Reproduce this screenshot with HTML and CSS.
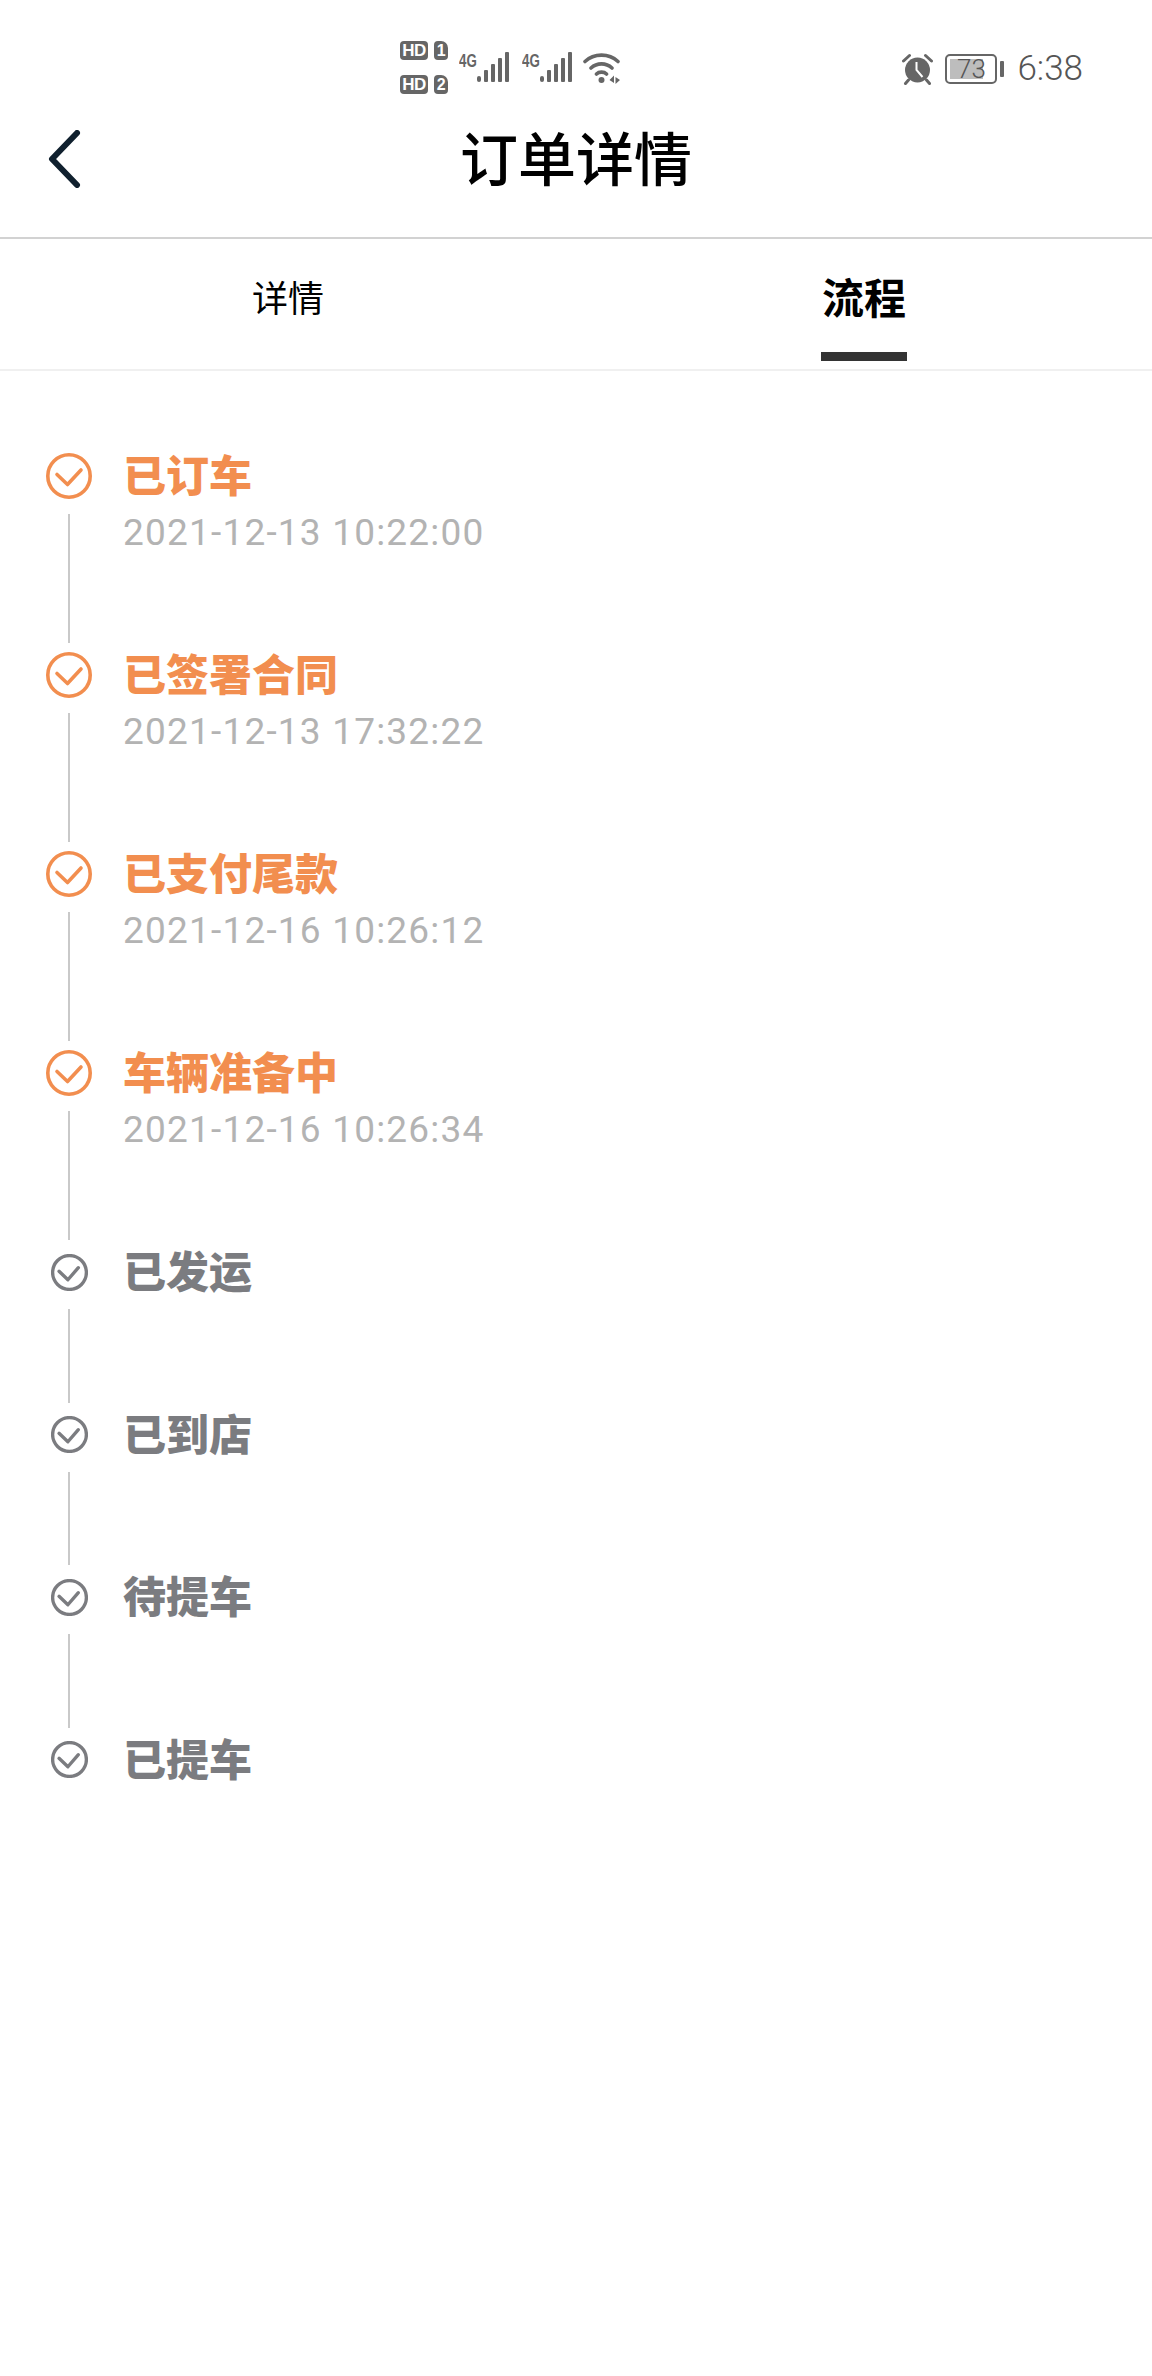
FILE: index.html
```html
<!DOCTYPE html>
<html lang="zh-CN">
<head>
    <meta charset="UTF-8">
    <meta name="viewport" content="width=device-width, initial-scale=1.0">
    <title>订单详情</title>
    <link rel="stylesheet" href="styles.css">
</head>
<body>
    <div class="status_bar">
        <div class="sim_group">
            <div class="sim_row"><span class="sim_hd">HD</span><span class="sim_no">1</span></div>
            <div class="sim_row"><span class="sim_hd">HD</span><span class="sim_no">2</span></div>
        </div>
        <div class="signal">
            <span class="signal_label">4G</span>
            <svg width="34" height="32" viewBox="0 0 34 32"><rect x="0" y="24" width="4" height="6" rx="2"/><rect x="7" y="18" width="4" height="12" rx="1"/><rect x="14" y="12" width="4" height="18" rx="1"/><rect x="21" y="6" width="4" height="24" rx="1"/><rect x="28" y="0" width="4" height="30" rx="1"/></svg>
        </div>
        <div class="signal">
            <span class="signal_label">4G</span>
            <svg width="34" height="32" viewBox="0 0 34 32"><rect x="0" y="24" width="4" height="6" rx="2"/><rect x="7" y="18" width="4" height="12" rx="1"/><rect x="14" y="12" width="4" height="18" rx="1"/><rect x="21" y="6" width="4" height="24" rx="1"/><rect x="28" y="0" width="4" height="30" rx="1"/></svg>
        </div>
        <svg class="wifi" width="38" height="32" viewBox="0 0 38 32">
            <path d="M2 9.5C11 1 26 1 35 9.5M8 16C14 10.500 23 10.500 29 16M13.500 22C16 19.500 21 19.500 23.500 22" fill="none" stroke="#666" stroke-width="3.600" stroke-linecap="round"/>
            <circle cx="18.500" cy="28" r="3" fill="#666"/>
            <path d="M31 23.500V31L26.500 28ZM32.500 25V32L37 28Z" fill="#666"/>
        </svg>
        <div class="status_right">
            <svg class="alarm" width="33" height="32" viewBox="0 0 32 32">
                <circle cx="16" cy="17" r="12.500" fill="#666"/>
                <path d="M2 8L8 2.500M30 8L24 2.500M7 27L4 30.500M25 27L28 30.500" fill="none" stroke="#666" stroke-width="3" stroke-linecap="round"/>
                <path d="M15 9V17L21 24" fill="none" stroke="#fff" stroke-width="2"/>
            </svg>
            <div class="battery">
                <div class="battery_body">
                    <div class="battery_fill"></div>
                    <span class="battery_text">73</span>
                </div>
                <div class="battery_tip"></div>
            </div>
            <span class="clock">6:38</span>
        </div>
    </div>

    <header class="nav_bar">
        <svg class="back_icon" width="36" height="58" viewBox="0 0 36 58">
            <path d="M31 3L6 29L31 55" fill="none" stroke="#10202e" stroke-width="6" stroke-linecap="round" stroke-linejoin="round"/>
        </svg>
        <h1 class="nav_title">订单详情</h1>
    </header>

    <nav class="tabs">
        <div class="tab">详情</div>
        <div class="tab tab_active">流程</div>
    </nav>

    <section class="flow">
        <div class="step step_done">
            <div class="step_mark">
                <svg class="check" viewBox="0 0 46 46"><circle cx="23" cy="23" r="21.200"/><path d="M11 21.500L21.500 31.500L35 17"/></svg>
                <div class="step_line"></div>
            </div>
            <div class="step_text">
                <div class="step_name">已订车</div>
                <div class="step_time">2021-12-13 10:22:00</div>
            </div>
        </div>
        <div class="step step_done">
            <div class="step_mark">
                <svg class="check" viewBox="0 0 46 46"><circle cx="23" cy="23" r="21.200"/><path d="M11 21.500L21.500 31.500L35 17"/></svg>
                <div class="step_line"></div>
            </div>
            <div class="step_text">
                <div class="step_name">已签署合同</div>
                <div class="step_time">2021-12-13 17:32:22</div>
            </div>
        </div>
        <div class="step step_done">
            <div class="step_mark">
                <svg class="check" viewBox="0 0 46 46"><circle cx="23" cy="23" r="21.200"/><path d="M11 21.500L21.500 31.500L35 17"/></svg>
                <div class="step_line"></div>
            </div>
            <div class="step_text">
                <div class="step_name">已支付尾款</div>
                <div class="step_time">2021-12-16 10:26:12</div>
            </div>
        </div>
        <div class="step step_done">
            <div class="step_mark">
                <svg class="check" viewBox="0 0 46 46"><circle cx="23" cy="23" r="21.200"/><path d="M11 21.500L21.500 31.500L35 17"/></svg>
                <div class="step_line"></div>
            </div>
            <div class="step_text">
                <div class="step_name">车辆准备中</div>
                <div class="step_time">2021-12-16 10:26:34</div>
            </div>
        </div>
        <div class="step">
            <div class="step_mark">
                <svg class="check" viewBox="0 0 46 46"><circle cx="23" cy="23" r="21"/><path d="M10 21.500L21 32L34 17"/></svg>
                <div class="step_line"></div>
            </div>
            <div class="step_text"><div class="step_name">已发运</div></div>
        </div>
        <div class="step">
            <div class="step_mark">
                <svg class="check" viewBox="0 0 46 46"><circle cx="23" cy="23" r="21"/><path d="M10 21.500L21 32L34 17"/></svg>
                <div class="step_line"></div>
            </div>
            <div class="step_text"><div class="step_name">已到店</div></div>
        </div>
        <div class="step">
            <div class="step_mark">
                <svg class="check" viewBox="0 0 46 46"><circle cx="23" cy="23" r="21"/><path d="M10 21.500L21 32L34 17"/></svg>
                <div class="step_line"></div>
            </div>
            <div class="step_text"><div class="step_name">待提车</div></div>
        </div>
        <div class="step step_last">
            <div class="step_mark">
                <svg class="check" viewBox="0 0 46 46"><circle cx="23" cy="23" r="21"/><path d="M10 21.500L21 32L34 17"/></svg>
            </div>
            <div class="step_text"><div class="step_name">已提车</div></div>
        </div>
    </section>
</body>
</html>
```

FILE: styles.css
```css
* {
    box-sizing: border-box;
}

body {
    margin: 0;
    min-height: 2376px;
    background: #ffffff;
    font-family: "Noto Sans CJK SC", Roboto, sans-serif;
}

/* status bar */
.status_bar {
    height: 92px;
    padding: 41px 69px 0 400px;
    display: flex;
    align-items: flex-start;
}

.sim_group {
    display: flex;
    flex-direction: column;
    gap: 15px;
    width: 48px;
}

.sim_row {
    display: flex;
    gap: 6px;
    height: 19px;
}

.sim_hd,
.sim_no {
    background: #666666;
    color: #ffffff;
    font-family: "Liberation Sans", sans-serif;
    font-size: 17px;
    font-weight: bold;
    line-height: 19px;
    text-align: center;
    border-radius: 4px;
    letter-spacing: -0.5px;
}

.sim_hd {
    width: 28px;
}

.sim_no {
    width: 14px;
    font-size: 16px;
    border-top-right-radius: 7px;
}

.signal {
    margin: 11px 0 0 11px;
    display: flex;
    align-items: flex-start;
    width: 52px;
}

.signal svg {
    fill: #666666;
    flex: none;
}

.signal_label {
    width: 18px;
    flex: none;
    color: #666666;
    font-family: "Liberation Sans", sans-serif;
    font-size: 19px;
    font-weight: bold;
    line-height: 17px;
    white-space: nowrap;
    transform: scaleX(0.7);
    transform-origin: left center;
}

.wifi {
    margin: 11px 0 0 9px;
}

.status_right {
    margin-left: auto;
    margin-top: 11px;
    display: flex;
    align-items: center;
    height: 34px;
}

.alarm {
    margin-right: 11px;
}

.battery {
    display: flex;
    align-items: center;
    gap: 3px;
    margin-right: 13px;
}

.battery_body {
    width: 52px;
    height: 30px;
    border: 2px solid #666666;
    border-radius: 5px;
    padding: 3px;
    display: flex;
    align-items: center;
    justify-content: center;
    position: relative;
}

.battery_fill {
    position: absolute;
    left: 3px;
    top: 3px;
    bottom: 3px;
    width: 33px;
    background: #bdbdbd;
}

.battery_text {
    position: relative;
    color: #555555;
    font-family: Roboto, sans-serif;
    font-weight: 300;
    font-size: 26px;
    line-height: 24px;
}

.battery_tip {
    width: 4px;
    height: 16px;
    background: #666666;
    border-radius: 1px;
}

.clock {
    color: #555555;
    font-family: Roboto, sans-serif;
    font-weight: 300;
    font-size: 35px;
    line-height: 34px;
}

/* title row */
.nav_bar {
    height: 147px;
    padding-left: 46px;
    border-bottom: 2px solid #d2d2d2;
    display: flex;
    align-items: center;
    position: relative;
}

.back_icon {
    margin-bottom: 12px;
}

.nav_title {
    position: absolute;
    left: 0;
    right: 0;
    top: 24px;
    margin: 0;
    text-align: center;
    color: #000000;
    font-size: 58px;
    font-weight: 500;
    line-height: 80px;
}

/* tabs */
.tabs {
    height: 132px;
    display: flex;
    border-bottom: 2px solid #f0f0f0;
}

.tab {
    flex: 1;
    display: flex;
    justify-content: center;
    padding-top: 32px;
    color: #000000;
    font-size: 36px;
    line-height: 50px;
}

.tab_active {
    position: relative;
    font-size: 42px;
    font-weight: bold;
    line-height: 54px;
    padding-top: 30px;
}

.tab_active::after {
    content: "";
    position: absolute;
    left: 245px;
    width: 86px;
    top: 113px;
    height: 9px;
    background: #333333;
}

/* timeline */
.flow {
    padding: 82px 0 0 46px;
}

.step {
    display: flex;
    height: 162.500px;
}

.step_done {
    height: 199px;
}

.step_mark {
    width: 46px;
    display: flex;
    flex-direction: column;
    align-items: center;
    padding-bottom: 9px;
}

.check {
    flex: none;
    width: 37px;
    height: 37px;
    margin: 4.500px 0;
    fill: none;
    stroke: #7b7c80;
    stroke-width: 4.200;
    stroke-linecap: round;
    stroke-linejoin: round;
}

.step_done .check {
    width: 46px;
    height: 46px;
    margin: 0;
    stroke: #f28e4f;
    stroke-width: 3.600;
}

.step_line {
    flex: 1;
    width: 2px;
    margin-top: 14px;
    background: #c9c9c9;
}

.step_done .step_line {
    margin-top: 15px;
}

.step_text {
    padding-left: 31px;
}

.step_name {
    color: #7b7c80;
    font-size: 43px;
    font-weight: 900;
    line-height: 46px;
    margin-top: -3px;
}

.step_done .step_name {
    color: #f28e4f;
}

.step_time {
    margin-top: 14px;
    color: #b3b3b3;
    font-family: Roboto, sans-serif;
    font-size: 37px;
    letter-spacing: 1.200px;
    line-height: 46px;
}
```
